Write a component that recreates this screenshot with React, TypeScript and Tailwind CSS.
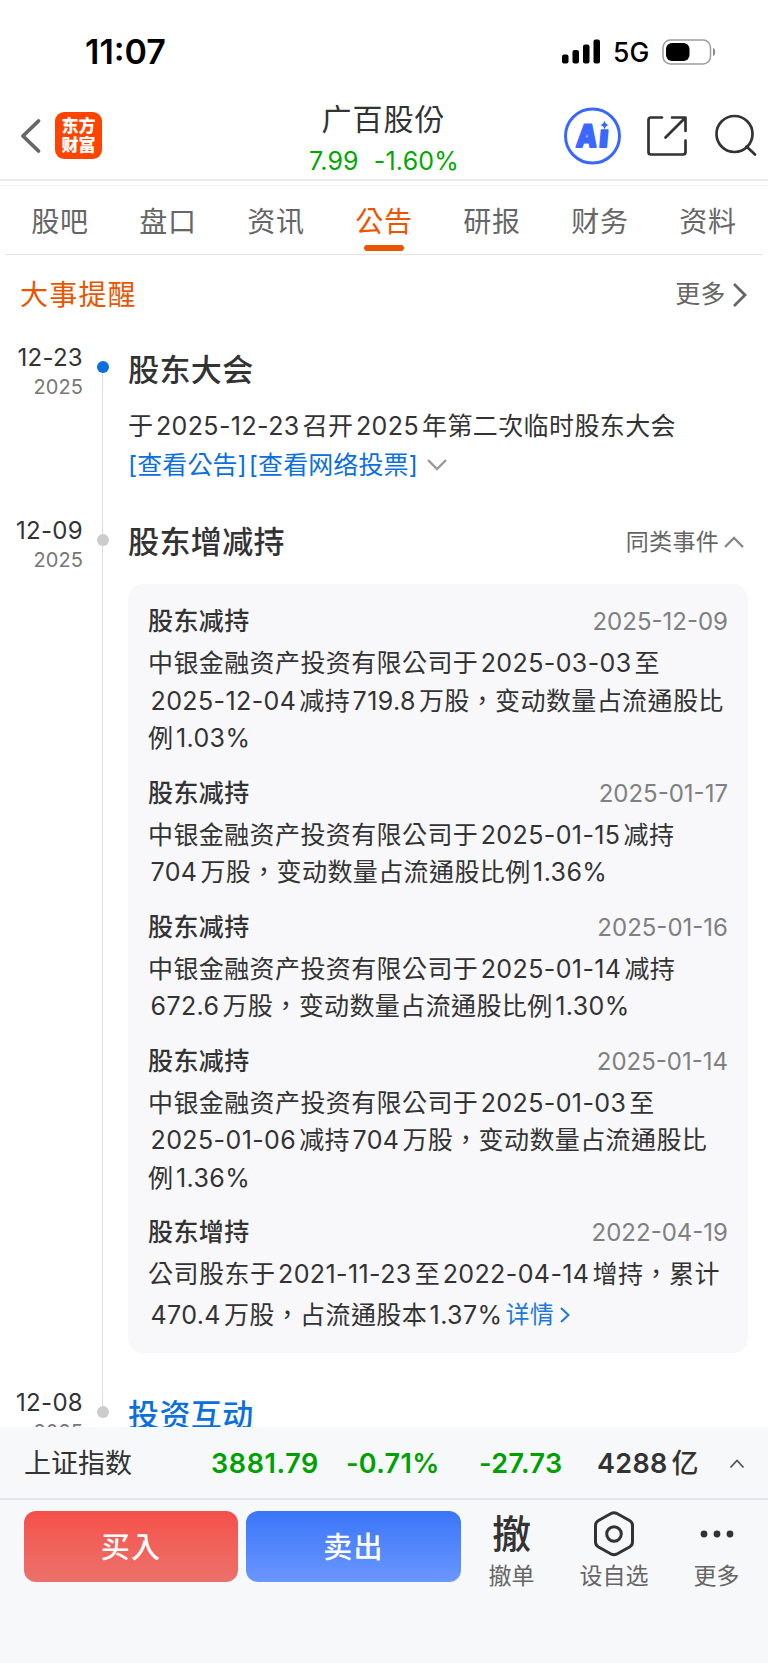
import { Fragment } from "react";

const tabs = ["股吧", "盘口", "资讯", "公告", "研报", "财务", "资料"];

type Item = { title: string; date: string; lines: string[] };

const items: Item[] = [
  {
    title: "股东减持",
    date: "2025-12-09",
    lines: [
      "中银金融资产投资有限公司于2025-03-03至",
      "2025-12-04减持719.8万股，变动数量占流通股比",
      "例1.03%",
    ],
  },
  {
    title: "股东减持",
    date: "2025-01-17",
    lines: ["中银金融资产投资有限公司于2025-01-15减持", "704万股，变动数量占流通股比例1.36%"],
  },
  {
    title: "股东减持",
    date: "2025-01-16",
    lines: ["中银金融资产投资有限公司于2025-01-14减持", "672.6万股，变动数量占流通股比例1.30%"],
  },
  {
    title: "股东减持",
    date: "2025-01-14",
    lines: [
      "中银金融资产投资有限公司于2025-01-03至",
      "2025-01-06减持704万股，变动数量占流通股比",
      "例1.36%",
    ],
  },
];

/* Sets numbers apart from the Chinese text around them. */
function Mixed({ text }: { text: string }) {
  return (
    <>
      {text.split(/([0-9.%-]+)/).map((part, i) =>
        /^[0-9.%-]+$/.test(part) ? (
          <span key={i} className="mr-[3px] ml-[2.5px] tracking-[0.4px]">
            {part}
          </span>
        ) : (
          <Fragment key={i}>{part}</Fragment>
        ),
      )}
    </>
  );
}

function ItemHead({ title, date }: { title: string; date: string }) {
  return (
    <div className="flex h-[46px] items-center justify-between">
      <span className="text-[25px] font-medium tracking-[0.4px]">{title}</span>
      <span className="text-[24px] text-[#808080]">{date}</span>
    </div>
  );
}

function DateColumn({ day, year }: { day: string; year: string }) {
  return (
    <div className="w-[83px] shrink-0 pt-px text-right">
      <div className="h-[29px] text-[24px] leading-[28px] tracking-[0.3px]">{day}</div>
      <div className="h-[28px] text-[20px] leading-[28px] tracking-[0.1px] text-[#777]">{year}</div>
    </div>
  );
}

function Rail({ dot, top, bottom }: { dot: string; top: string; bottom: string }) {
  return (
    <div className="flex w-[39px] shrink-0 flex-col items-center">
      <div className={`w-px ${top}`} />
      <div className={`size-3 shrink-0 rounded-full ${dot}`} />
      <div className={`w-px grow ${bottom}`} />
    </div>
  );
}

export default function App() {
  return (
    <div className="flex h-[1663px] w-[768px] flex-col overflow-hidden bg-white font-['Inter','Noto_Sans_CJK_TC',sans-serif] whitespace-nowrap text-[#333]">
      {/* Status bar */}
      <div className="flex h-[92px] shrink-0 items-center justify-between pt-[11px] pr-[51px] pl-[85px] text-black">
        <span className="text-[34px] font-semibold">11:07</span>
        <div className="flex items-center">
          <svg width="40" height="26" viewBox="0 0 40 26">
            <rect x="1" y="15.5" width="6.5" height="9" rx="2" />
            <rect x="11.5" y="11" width="6.5" height="13.5" rx="2" />
            <rect x="22" y="5.5" width="6.5" height="19" rx="2" />
            <rect x="32.5" y="0.5" width="6.5" height="24" rx="2" />
          </svg>
          <span className="ml-[12px] w-[37px] pt-[2px] text-[26.5px] font-medium">5G</span>
          <svg className="ml-[12px]" width="55" height="26" viewBox="0 0 55 26">
            <rect x="1" y="1" width="47.5" height="24" rx="7.5" fill="none" stroke="#9c9c9c" strokeWidth="1.5" />
            <rect x="4" y="4" width="23.5" height="18" rx="6" />
            <path d="M51 9c3 1 3 7 0 8z" fill="#8c8c8c" />
          </svg>
        </div>
      </div>

      {/* Title bar */}
      <header className="flex h-[87px] shrink-0 items-center">
        <div className="flex w-[250px] items-center pl-[18px]">
          <svg width="24" height="36" viewBox="0 0 24 36" fill="none" stroke="#666" strokeWidth="3.8" strokeLinecap="round" strokeLinejoin="round">
            <path d="M20.500 3 5 18l15.500 15" />
          </svg>
          <div className="ml-[13px] flex size-[47px] flex-col items-center justify-center rounded-[9px] bg-[#ff4400] text-[17px] leading-[19px] font-black text-white">
            <span>东方</span>
            <span>财富</span>
          </div>
        </div>
        <div className="flex w-[267px] flex-col items-center">
          <div className="mt-[5px] h-[43px] text-[30px] leading-[42px] tracking-[1px]">广百股份</div>
          <div className="flex h-[38px] gap-[15px] pl-px text-[25px] leading-[40px] tracking-[0.200px] text-[#00a800]">
            <span>7.99</span>
            <span>-1.60%</span>
          </div>
        </div>
        <div className="flex grow items-center pl-[46px]">
          <svg width="58" height="58" viewBox="0 0 58 58" aria-label="Ai">
            <circle cx="29.500" cy="29" r="27" fill="none" stroke="#3a68ff" strokeWidth="3" />
            <g fill="#3a68ff" stroke="#3a68ff" strokeWidth="1.800" strokeLinejoin="round" fontSize="31" fontWeight="900">
              <text transform="translate(12.500 39.500) skewX(-5)" textLength="21" lengthAdjust="spacingAndGlyphs">A</text>
              <text transform="translate(35.500 40) skewX(-5)">ı</text>
            </g>
            <path d="M41.500 13.500q.8 3.700 4.500 4.500-3.700.8-4.500 4.500-.8-3.700-4.500-4.500 3.700-.8 4.500-4.500z" fill="#3a68ff" />
          </svg>
          <svg className="ml-[24px]" width="44" height="44" viewBox="0 0 44 44" fill="none" stroke="#333" strokeWidth="2.700" strokeLinecap="round" strokeLinejoin="round">
            <path d="M17 3.500H6q-2.500 0-2.500 2.500v32q0 2.500 2.500 2.500h32q2.500 0 2.500-2.500V26.500M27 3.500h13.500V17M40 4 20.500 23.500" />
          </svg>
          <svg className="ml-[25px]" width="44" height="44" viewBox="0 0 44 44" fill="none" stroke="#333" strokeWidth="2.700" strokeLinecap="round">
            <circle cx="20.500" cy="20" r="18" />
            <path d="m32.500 32.500 8.500 8" />
          </svg>
        </div>
      </header>
      <div className="h-[7px] shrink-0 border-t-2 border-b border-t-[#ebebeb] border-b-[#f3f3f3]" />

      {/* Tabs */}
      <nav className="mx-[6px] grid h-[69px] shrink-0 grid-cols-7 border-b border-[#e3e3e3]">
        {tabs.map((tab) => (
          <div key={tab} className={`flex flex-col items-center pt-[15px] text-[28px] leading-[42px] tracking-[0.7px] ${tab === "公告" ? "text-[#eb5500]" : "text-[#666]"}`}>
            {tab}
            {tab === "公告" && <span className="mt-[2px] h-[6px] w-[40px] rounded-full bg-[#eb5500]" />}
          </div>
        ))}
      </nav>

      <main className="flex min-h-0 grow flex-col overflow-hidden">
        <div className="flex h-[81px] shrink-0 items-center justify-between pr-[20px] pb-px pl-[20px]">
          <h2 className="text-[28px] tracking-[1.200px] text-[#eb5500]">大事提醒</h2>
          <div className="flex items-center text-[25px] tracking-[0.4px] text-[#666]">
            更多
            <svg className="ml-[5px]" width="17" height="28" viewBox="0 0 17 28" fill="none" stroke="#666" strokeWidth="2.800">
              <path d="m3 3 11 11L3 25" />
            </svg>
          </div>
        </div>

        <section className="flex h-[180px] shrink-0 pt-[7px]">
          <DateColumn day="12-23" year="2025" />
          <Rail dot="bg-[#0b6fe0]" top="h-[18px]" bottom="bg-[#ddd]" />
          <div className="pl-[6px]">
            <h3 className="h-[54px] text-[31px] leading-[53px] font-medium tracking-[0.400px]">股东大会</h3>
            <div className="mt-[9px] h-[40px] text-[25px] leading-[40px] tracking-[0.400px]">
              <span>
                <Mixed text="于2025-12-23召开2025年第二次临时股东大会" />
              </span>
            </div>
            <div className="flex h-[40px] items-center pb-[2px] text-[25px] leading-[40px] tracking-[0.100px] text-[#0b6fe0]">
              <span>[查看公告]</span>
              <span className="ml-[2px]">[查看网络投票]</span>
              <svg className="ml-[8px]" width="22" height="16" viewBox="0 0 22 16" fill="none" stroke="#999" strokeWidth="2.400">
                <path d="m2 3 9 9 9-9" />
              </svg>
            </div>
          </div>
        </section>

        <section className="flex h-[872px] shrink-0">
          <DateColumn day="12-09" year="2025" />
          <Rail dot="bg-[#ccc]" top="h-[18px] bg-[#ddd]" bottom="bg-[#ddd]" />
          <div className="w-[626px] pl-[6px]">
            <div className="flex h-[54px] items-center justify-between pr-[3px] pb-px">
              <h3 className="text-[31px] font-medium tracking-[0.400px]">股东增减持</h3>
              <div className="flex items-center text-[23px] tracking-[0.300px] text-[#666]">
                同类事件
                <svg className="ml-[4px]" width="22" height="16" viewBox="0 0 22 16" fill="none" stroke="#888" strokeWidth="2.400">
                  <path d="m2 12 9-9 9 9" />
                </svg>
              </div>
            </div>
            <div className="mt-[14px] h-[769px] rounded-[15px] bg-[#f8f8fa] px-[20px] pt-[15px]">
              {items.map((item) => (
                <article key={item.date} className="pb-[13px]">
                  <ItemHead title={item.title} date={item.date} />
                  {item.lines.map((line) => (
                    <p key={line} className="h-[37.5px] text-[25px] leading-[37.500px] tracking-[0.400px]">
                      <Mixed text={line} />
                    </p>
                  ))}
                </article>
              ))}
              <article>
                <ItemHead title="股东增持" date="2022-04-19" />
                <p className="h-[40px] text-[25px] leading-[37.500px] tracking-[0.500px]">
                  <Mixed text="公司股东于2021-11-23至2022-04-14增持，累计" />
                </p>
                <p className="flex h-[40px] items-center pb-[2px] text-[25px] leading-[38px] tracking-[0.400px]">
                  <span>
                    <Mixed text="470.4万股，占流通股本1.37%" />
                  </span>
                  <span className="text-[24px] text-[#1f78d8]">详情</span>
                  <svg className="ml-[5px]" width="12" height="18" viewBox="0 0 12 18" fill="none" stroke="#1f78d8" strokeWidth="2">
                    <path d="m2 2 7.500 7L2 16" />
                  </svg>
                </p>
              </article>
            </div>
          </div>
        </section>

        <section className="flex h-[80px] shrink-0">
          <DateColumn day="12-08" year="2025" />
          <Rail dot="bg-[#ccc]" top="h-[18px] bg-[#ddd]" bottom="" />
          <h3 className="pl-[6px] text-[31px] leading-[53px] font-medium tracking-[0.400px] text-[#0b6fe0]">投资互动</h3>
        </section>
      </main>

      {/* Index ticker */}
      <div className="flex h-[73px] shrink-0 items-center border-b-2 border-[#e4e5e8] bg-[#f7f8fa] pt-[3px] pl-[24px] text-[27px] font-semibold text-[#00a000]">
        <span className="w-[187px] text-[27px] font-normal text-[#333]">上证指数</span>
        <span className="w-[135px] tracking-[0.600px]">3881.79</span>
        <span className="w-[133px] tracking-[0.300px]">-0.71%</span>
        <span className="w-[118px] tracking-[0.400px]">-27.73</span>
        <span className="w-[132px] tracking-[0.300px] text-[#333]">
          4288<span className="ml-[4px] font-medium">亿</span>
        </span>
        <svg width="16" height="12" viewBox="0 0 16 12" fill="none" stroke="#555" strokeWidth="1.800">
          <path d="m1.500 9.500 6.500-7 6.500 7" />
        </svg>
      </div>

      {/* Trade bar */}
      <footer className="flex h-[163px] shrink-0 items-start bg-[#f7f8fa] pt-[11px] pl-[24px]">
        <button className="h-[71px] w-[214px] rounded-[12px] bg-linear-to-b from-[#f4504a] to-[#ec716b] pt-[2px] text-[29px] font-medium tracking-[1.200px] text-white">买入</button>
        <button className="ml-[8px] h-[71px] w-[215px] rounded-[12px] bg-linear-to-b from-[#3a75f8] to-[#6a96ff] pt-[2px] text-[29px] font-medium tracking-[1.200px] text-white">卖出</button>
        <div className="flex w-[101px] flex-col items-center text-[23px] text-[#666]">
          <span className="h-[46px] text-[39px] leading-[45px] font-medium text-[#333]">撤</span>
          <span className="leading-[39px]">撤单</span>
        </div>
        <div className="flex w-[104px] flex-col items-center text-[23px] text-[#666]">
          <svg width="46" height="46" viewBox="0 0 46 46" fill="none" stroke="#333" strokeWidth="3">
            <path d="M20.500 2.300q2.500-1.300 5 0l13 7.200q3 1.700 3 5v16.500q0 3.300-3 5l-13 7.200q-2.500 1.300-5 0l-13-7.200q-3-1.700-3-5V14.500q0-3.300 3-5z" />
            <circle cx="23" cy="23" r="7.300" />
          </svg>
          <span className="leading-[39px]">设自选</span>
        </div>
        <div className="flex w-[101px] flex-col items-center text-[23px] text-[#666]">
          <svg width="34" height="46" viewBox="0 0 34 46" fill="#333">
            <circle cx="4" cy="23" r="3.400" />
            <circle cx="17" cy="23" r="3.400" />
            <circle cx="30" cy="23" r="3.400" />
          </svg>
          <span className="leading-[39px]">更多</span>
        </div>
      </footer>
    </div>
  );
}
